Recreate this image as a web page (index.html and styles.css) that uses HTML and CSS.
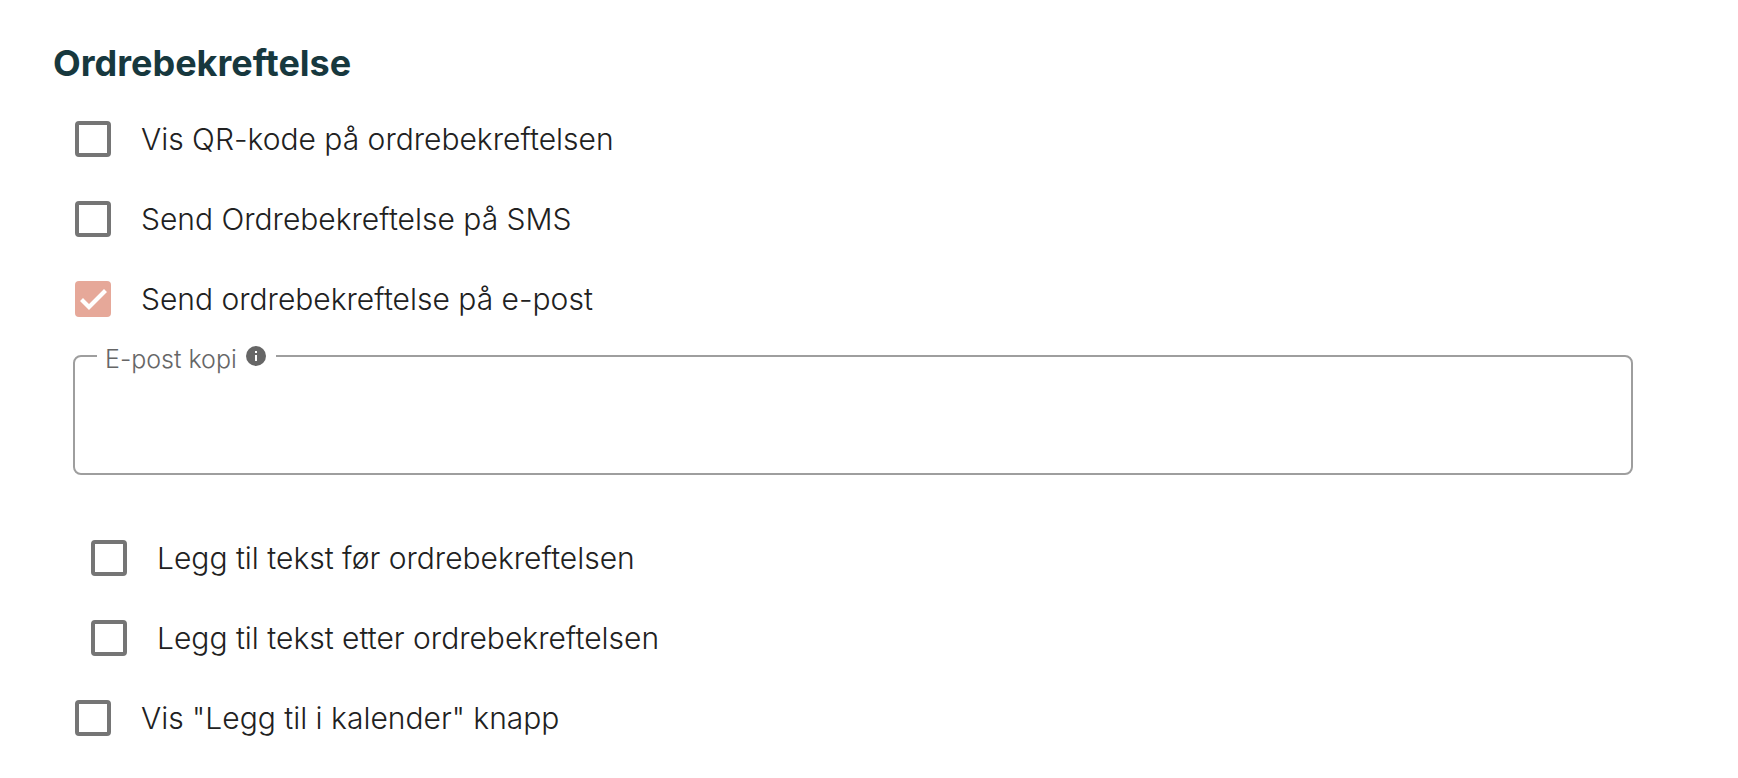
FILE: index.html
```html
<!DOCTYPE html>
<html lang="no">
<head>
    <meta charset="utf-8">
    <title>Ordrebekreftelse</title>
    <link rel="stylesheet" href="styles.css">
</head>
<body>
    <form class="settings">
        <h2 class="title">Ordrebekreftelse</h2>

        <div class="options">
            <div class="option">
                <input type="checkbox" id="showQr">
                <label for="showQr">Vis QR-kode på ordrebekreftelsen</label>
            </div>
            <div class="option">
                <input type="checkbox" id="sendSms">
                <label for="sendSms">Send Ordrebekreftelse på SMS</label>
            </div>
            <div class="option">
                <input type="checkbox" id="sendEmail" checked>
                <label for="sendEmail">Send ordrebekreftelse på e-post</label>
            </div>

            <fieldset class="field">
                <legend>
                    <label for="emailCopy">E-post kopi</label>
                    <svg class="info" viewBox="0 0 20 20" aria-hidden="true">
                        <circle cx="10" cy="10" r="10" fill="#666"/>
                        <path d="M9 5h2v2H9zM9 9h2v6H9z" fill="#fff"/>
                    </svg>
                </legend>
                <input type="text" id="emailCopy">
            </fieldset>

            <div class="option nested">
                <input type="checkbox" id="textBefore">
                <label for="textBefore">Legg til tekst før ordrebekreftelsen</label>
            </div>
            <div class="option nested">
                <input type="checkbox" id="textAfter">
                <label for="textAfter">Legg til tekst etter ordrebekreftelsen</label>
            </div>
            <div class="option">
                <input type="checkbox" id="showCalendar">
                <label for="showCalendar">Vis "Legg til i kalender" knapp</label>
            </div>
        </div>
    </form>
</body>
</html>
```

FILE: styles.css
```css
* {
    box-sizing: border-box;
}

body {
    margin: 0;
    background: #fff;
    color: #212121;
    font-family: Inter, "Open Sans", sans-serif;
    font-size: 30px;
    font-weight: 300;
}

.settings {
    padding: 39px 105px 20px 53px;
}

.title {
    margin: 0 0 12px;
    color: #17383e;
    font-size: 36px;
    line-height: 48px;
    font-weight: 700;
}

.options {
    padding-left: 20px;
}

.option {
    display: flex;
    align-items: center;
    gap: 30px;
    height: 80px;
    padding-left: 2px;
}

.nested {
    padding-left: 18px;
}

.option input {
    appearance: none;
    flex: none;
    width: 36px;
    height: 36px;
    margin: 0;
    border: 4px solid #757575;
    border-radius: 4px;
    cursor: pointer;
}

.option input:checked {
    border: none;
    background: #e6a899;
}

.option input:checked::before {
    content: "";
    display: block;
    width: 27px;
    height: 22px;
    margin: 8px 5px;
    background: #fff;
    clip-path: polygon(0 12px, 3px 9px, 9px 15px, 24px 0, 27px 3px, 9px 21px);
}

.field {
    min-width: 0;
    margin: 0 0 43px;
    padding: 0 22px;
    border: 2px solid #9e9e9e;
    border-radius: 8px;
}

.field legend {
    display: flex;
    align-items: center;
    gap: 9px;
    padding: 0 10px 0 8px;
    color: #666;
    font-size: 25px;
    line-height: 28px;
}

.field label {
    padding-top: 6px;
}

.info {
    width: 20px;
    height: 20px;
}

.field input {
    display: block;
    width: 100%;
    height: 100px;
    padding: 0;
    border: none;
    outline: none;
    background: none;
    font: inherit;
    color: inherit;
}
```
